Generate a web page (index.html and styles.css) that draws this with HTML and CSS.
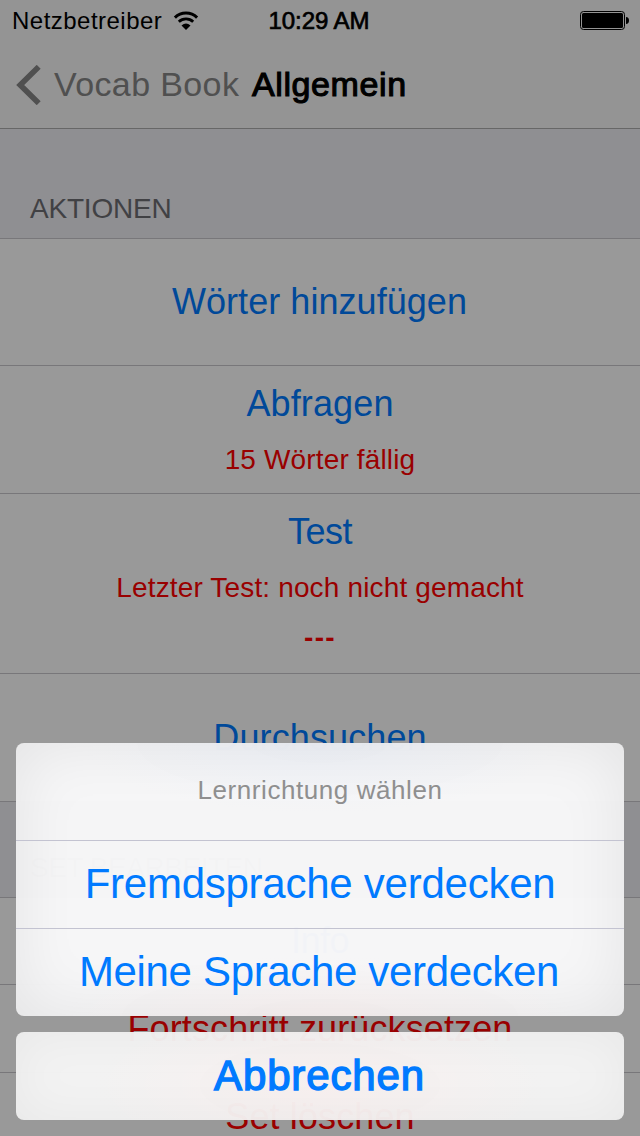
FILE: index.html
```
<!DOCTYPE html>
<html lang="de">
<head>
<meta charset="utf-8">
<title>Allgemein</title>
<link rel="stylesheet" href="styles.css">
</head>
<body>
<div class="screen">
  <header class="topbar">
    <div class="status">
      <div class="carrier">
        <span class="carrier-name">Netzbetreiber</span>
        <svg class="wifi" width="26" height="20" viewBox="0 0 26 20">
          <path d="M1.9 6.6A15.8 15.8 0 0 1 24.1 6.6" fill="none" stroke="#000" stroke-width="3"/>
          <path d="M5.8 10.8A10.3 10.3 0 0 1 20.2 10.8" fill="none" stroke="#000" stroke-width="2.8"/>
          <path d="M13 19L8.5 14.6Q13 10.5 17.5 14.6Z" fill="#000"/>
        </svg>
      </div>
      <span class="time">10:29 AM</span>
      <svg class="battery" width="50" height="19" viewBox="0 0 50 19">
        <rect x=".5" y=".5" width="44" height="18" rx="3" fill="none" stroke="#000"/>
        <rect x="2" y="2" width="41" height="15" rx="1.5" fill="#000"/>
        <path d="M46 6Q49 6.4 49 9.5T46 13Z" fill="#000"/>
      </svg>
    </div>
    <nav class="nav">
      <svg class="chevron" width="26" height="40" viewBox="0 0 26 40">
        <path d="M23.7 1.8L5.2 20L23.7 38.2" fill="none" stroke="#858585" stroke-width="5.6"/>
      </svg>
      <span class="back">Vocab Book</span>
      <h1 class="title">Allgemein</h1>
    </nav>
  </header>

  <h2 class="section first"><span>AKTIONEN</span></h2>
  <div class="cell tall"><span class="action add">Wörter hinzufügen</span></div>
  <div class="cell quiz"><span class="action">Abfragen</span><span class="detail">15 Wörter fällig</span></div>
  <div class="cell test"><span class="action tight">Test</span><span class="detail">Letzter Test: noch nicht gemacht</span><span class="detail dashes">---</span></div>
  <div class="cell browse"><span class="action">Durchsuchen</span></div>
  <h2 class="section second"><span>SET BEARBEITEN</span></h2>
  <div class="cell info"><span class="action tight">Info</span></div>
  <div class="cell reset"><span class="action danger">Fortschritt zurücksetzen</span></div>
  <div class="cell reset"><span class="action danger">Set löschen</span></div>

  <div class="dim">
    <div class="sheet options">
      <div class="prompt"><span>Lernrichtung wählen</span></div>
      <div class="choice"><span class="foreign">Fremdsprache verdecken</span></div>
      <div class="choice"><span class="own">Meine Sprache verdecken</span></div>
    </div>
    <div class="sheet cancel"><span>Abbrechen</span></div>
  </div>
</div>
</body>
</html>
```
FILE: styles.css
```
* { box-sizing: border-box; }
body {
  margin: 0;
  font-family: "Liberation Sans", Arial, sans-serif;
  overflow: hidden;
}
.screen {
  position: relative;
  width: 640px;
  height: 1136px;
  overflow: hidden;
  background: #fff;
}
h1, h2 { margin: 0; font-weight: 400; }

.topbar {
  height: 129px;
  background: #f7f7f7;
  border-bottom: 1px solid #acacac;
}
.status {
  display: grid;
  grid-template-columns: 1fr auto 1fr;
  height: 40px;
  padding: 0 10px 0 12px;
  font-size: 24px;
  line-height: 41px;
}
.carrier { display: flex; align-items: center; gap: 11px; }
.carrier-name { letter-spacing: .48px; }
.time { padding-right: 4px; letter-spacing: -.04px; -webkit-text-stroke: .7px #000; }
.battery { justify-self: end; margin-top: 11px; }
.nav {
  display: flex;
  align-items: center;
  height: 88px;
  padding-left: 15px;
  font-size: 34px;
  line-height: 40px;
}
.chevron { margin-top: 1px; }
.back { width: 185px; margin-left: 13px; letter-spacing: .38px; color: #858585; white-space: nowrap; }
.title { margin-left: 13px; font-size: 34px; letter-spacing: .6px; -webkit-text-stroke: 1.1px #000; }

.section {
  display: flex;
  align-items: flex-end;
  padding: 0 30px 11px;
  font-size: 28px;
  line-height: 36px;
  letter-spacing: -.2px;
  color: #6d6d72;
  background: #efeff4;
  border-bottom: 1px solid #c8c7cc;
}
.first { height: 110px; }
.second { height: 96px; letter-spacing: -.47px; }

.cell {
  display: flex;
  flex-direction: column;
  align-items: center;
  justify-content: center;
  border-bottom: 1px solid #c8c7cc;
  background: #fff;
}
.tall { height: 127px; padding-right: 1px; }
.quiz { height: 128px; justify-content: flex-start; padding-top: 18px; }
.test { height: 180px; justify-content: flex-start; padding-top: 18px; }
.browse { height: 128px; }
.info { height: 87px; }
.reset { height: 88px; flex: none; }
.action { font-size: 36px; line-height: 40px; letter-spacing: .12px; color: #007aff; }
.add { letter-spacing: .05px; }
.tight { letter-spacing: -.5px; }
.danger { color: #f00; }
.detail { margin-top: 11px; font-size: 28px; line-height: 50px; letter-spacing: .15px; color: #f00; }
.detail + .detail { margin-top: 0; }
.dashes { font-weight: 700; letter-spacing: 1.4px; }

.dim {
  position: absolute;
  inset: 0;
  display: flex;
  flex-direction: column;
  justify-content: flex-end;
  gap: 16px;
  padding: 16px;
  background: rgba(0, 0, 0, .4);
}
.sheet {
  border-radius: 8px;
  color: #007aff;
  font-size: 42px;
  line-height: 48px;
}
.options {
  background: radial-gradient(ellipse 240px 70px at 50% 0, rgba(225, 233, 248, .35), transparent),
    radial-gradient(ellipse 260px 60px at 50% 100%, rgba(255, 235, 233, .35), transparent),
    rgba(248, 248, 249, .978);
  box-shadow: inset 0 0 64px rgba(0, 0, 0, .08);
}
.prompt, .choice, .cancel {
  display: flex;
  align-items: center;
  justify-content: center;
}
.prompt { height: 97px; padding-bottom: 3px; font-size: 26px; letter-spacing: .57px; color: #8f8f8f; }
.choice { height: 88px; padding-bottom: 1px; border-top: 1px solid #c3c3d1; }
.foreign { letter-spacing: -.25px; }
.own { padding-right: 2px; letter-spacing: -.34px; }
.cancel {
  height: 88px;
  padding-right: 1px;
  letter-spacing: .85px;
  -webkit-text-stroke: 1.4px #007aff;
  background: radial-gradient(ellipse 230px 80px at 50% 60%, rgba(255, 232, 230, .35), transparent),
    rgba(246, 246, 246, .965);
  box-shadow: inset 0 0 50px rgba(0, 0, 0, .045);
}
```
